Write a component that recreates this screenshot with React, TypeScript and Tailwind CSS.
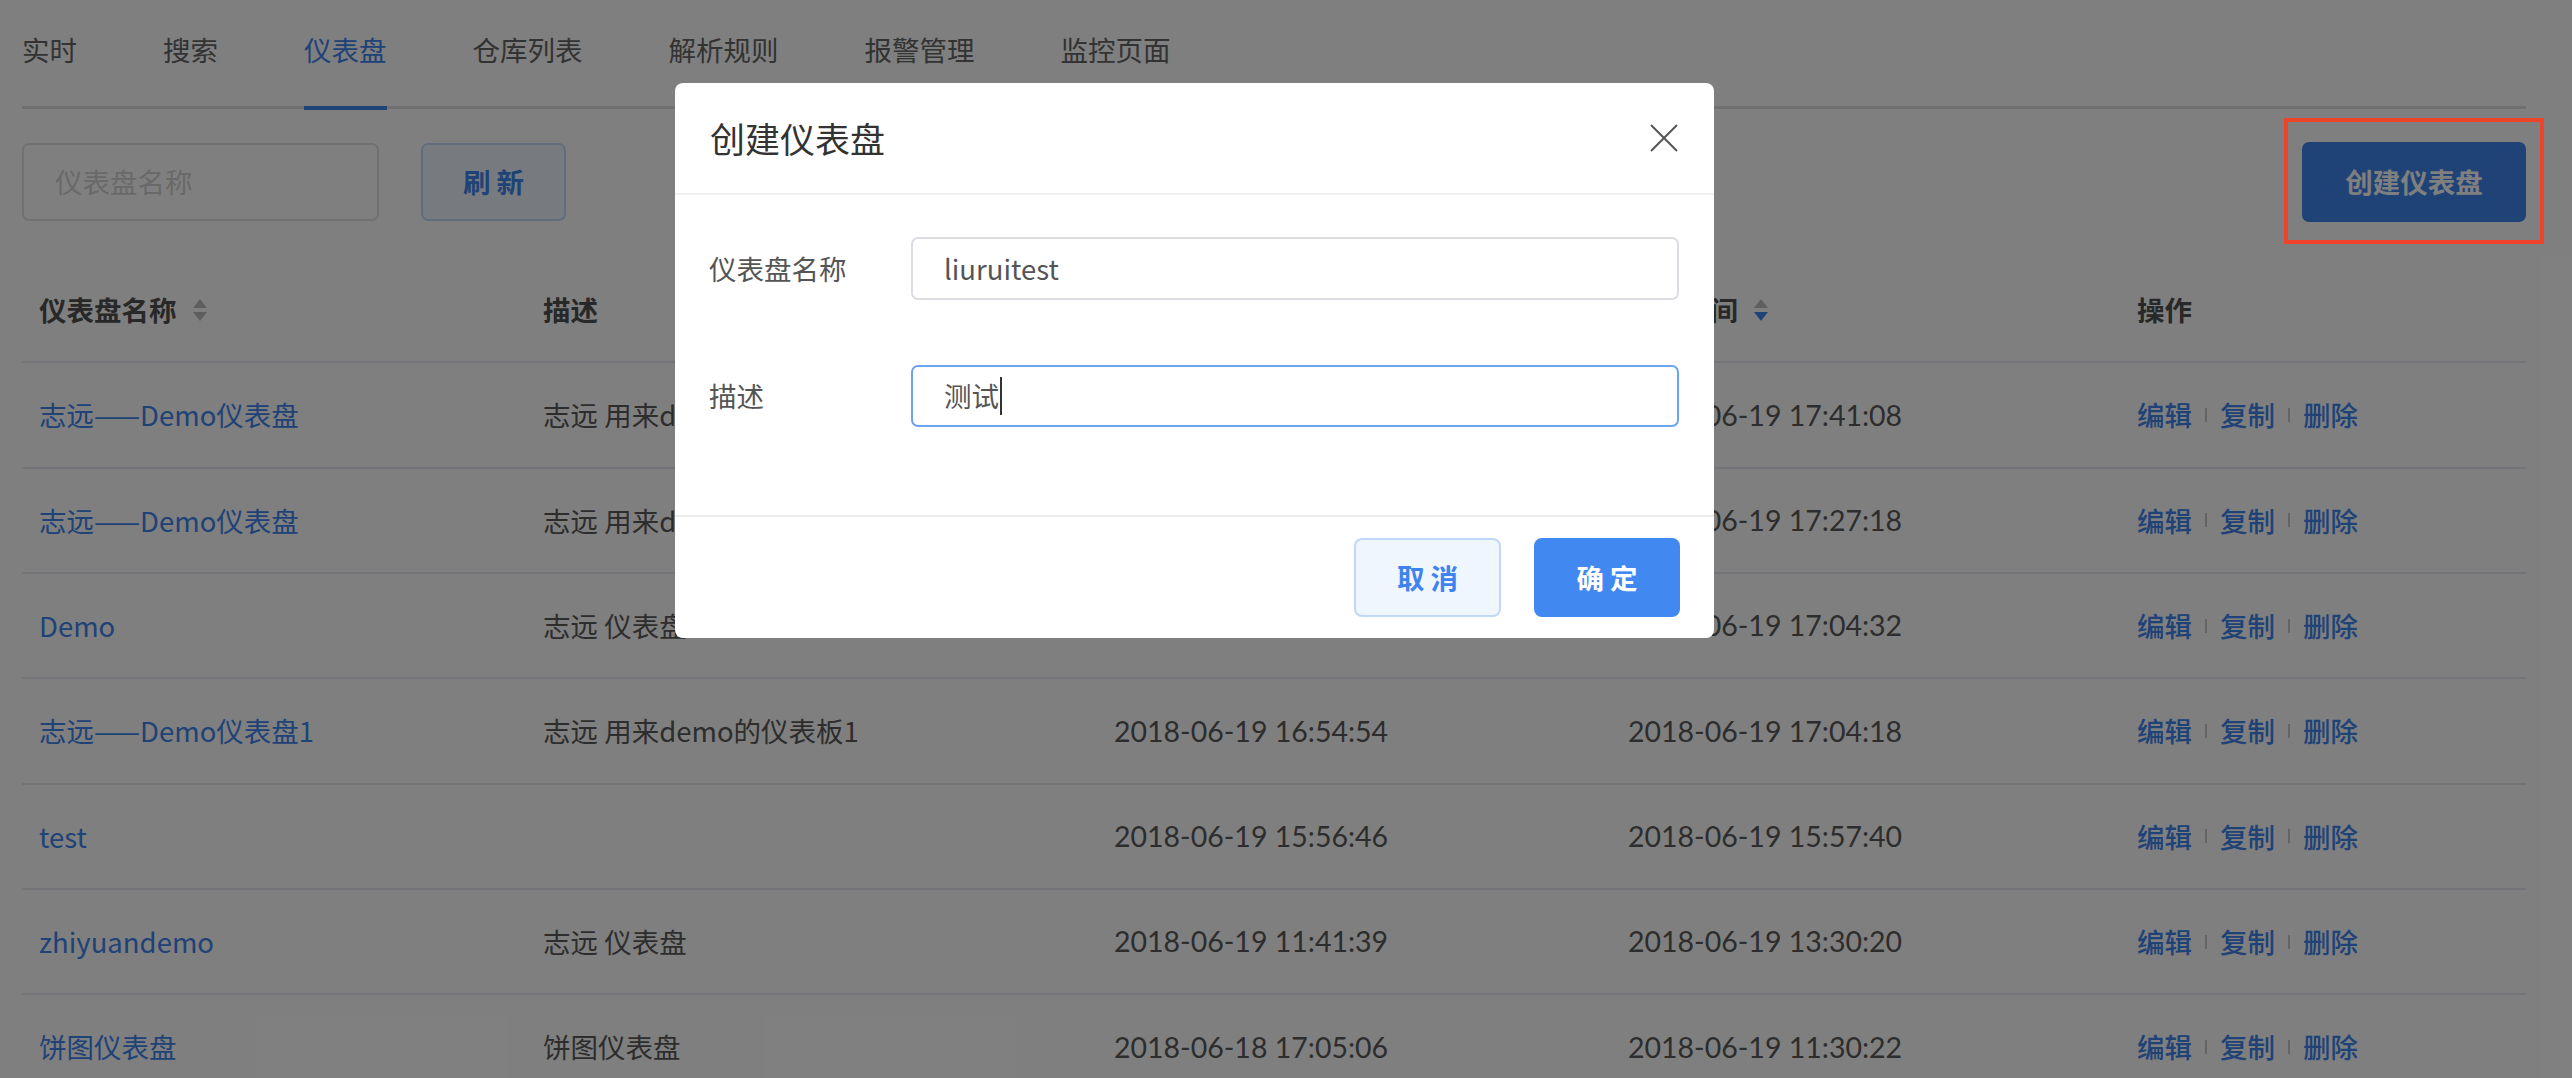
const tabs = ["实时", "搜索", "仪表盘", "仓库列表", "解析规则", "报警管理", "监控页面"];

const rows = [
  { name: "志远——Demo仪表盘", desc: "志远 用来demo的仪表板", created: "2018-06-19 17:38:52", updated: "2018-06-19 17:41:08" },
  { name: "志远——Demo仪表盘", desc: "志远 用来demo的仪表板", created: "2018-06-19 17:25:41", updated: "2018-06-19 17:27:18" },
  { name: "Demo", desc: "志远 仪表盘", created: "2018-06-19 17:02:15", updated: "2018-06-19 17:04:32" },
  { name: "志远——Demo仪表盘1", desc: "志远 用来demo的仪表板1", created: "2018-06-19 16:54:54", updated: "2018-06-19 17:04:18" },
  { name: "test", desc: "", created: "2018-06-19 15:56:46", updated: "2018-06-19 15:57:40" },
  { name: "zhiyuandemo", desc: "志远 仪表盘", created: "2018-06-19 11:41:39", updated: "2018-06-19 13:30:20" },
  { name: "饼图仪表盘", desc: "饼图仪表盘", created: "2018-06-18 17:05:06", updated: "2018-06-19 11:30:22" },
];

const cols = "grid grid-cols-[504px_571px_514px_509px_1fr] items-center";

export default function App() {
  return (
    <div className="relative w-full h-[1078px] overflow-hidden bg-white font-['Noto_Sans_CJK_SC',sans-serif] text-[27.5px] text-[#5a5a5a]">
      <div className="pl-[22px] pr-[46px]">
        {/* Tabs */}
        <div className="flex h-[109px] gap-[86px] border-b-[3px] border-[#e0e0e0]">
          {tabs.map((t) => (
            <div
              key={t}
              className={`relative flex items-center pb-[6px] ${t === "仪表盘" ? "text-[#3f84ee]" : "text-[#666]"}`}
            >
              {t}
              {t === "仪表盘" && <span className="absolute left-0 right-0 bottom-[-4px] h-[4px] bg-[#3f84ee]" />}
            </div>
          ))}
        </div>

        {/* Toolbar */}
        <div className="mt-[34px] flex h-[78px] items-center justify-between">
          <div className="flex h-full items-center">
            <div className="flex h-full w-[357px] items-center rounded-[7px] border-2 border-[#e3e3e8] pl-[31px] text-[#d2d2d2]">
              仪表盘名称
            </div>
            <button className="ml-[42px] h-full w-[145px] rounded-[7px] border-2 border-[#c2daf8] bg-[#eef5fe] font-bold text-[#3f84ee]">
              刷 新
            </button>
          </div>
          <button className="h-[80px] w-[224px] rounded-[7px] bg-[#3f84ee] font-semibold text-white">创建仪表盘</button>
        </div>

        {/* Table */}
        <div className="mt-[37px]">
          <div className={`${cols} h-[105.33px] border-b-2 border-[#e9e9f0] font-bold text-[#505050]`}>
            <div className="flex items-center gap-[16px] pl-[17px]">
              仪表盘名称 <SortIcon />
            </div>
            <div className="pl-[17px]">描述</div>
            <div className="flex items-center gap-[16px] pl-[17px]">
              创建时间 <SortIcon />
            </div>
            <div className="flex items-center gap-[16px] pl-[17px]">
              更新时间 <SortIcon active />
            </div>
            <div className="pl-[17px]">操作</div>
          </div>
          {rows.map((r, i) => (
            <div key={i} className={`${cols} h-[105.33px] border-b-2 border-[#e9e9f0]`}>
              <div className="pl-[17px] text-[#3f84ee]">{r.name}</div>
              <div className="pl-[17px]">{r.desc}</div>
              <div className="pl-[17px] font-['Lato',sans-serif] text-[28.5px]">{r.created}</div>
              <div className="pl-[17px] font-['Lato',sans-serif] text-[28.5px]">{r.updated}</div>
              <div className="flex items-center pl-[17px] font-medium text-[#3f84ee]">
                <span>编辑</span>
                <span className="mx-[13px] h-[14px] w-[2px] bg-[#c8c8c8]" />
                <span>复制</span>
                <span className="mx-[13px] h-[14px] w-[2px] bg-[#c8c8c8]" />
                <span>删除</span>
              </div>
            </div>
          ))}
        </div>
      </div>

      {/* Mask */}
      <div className="absolute inset-0 bg-black/50" />

      {/* Annotation box */}
      <div className="absolute left-[2284px] top-[118px] h-[126px] w-[260px] border-[4px] border-[#f0432c]" />

      {/* Dialog */}
      <div className="absolute left-[675px] top-[83px] flex h-[555px] w-[1039px] flex-col rounded-[8px] bg-white">
        <div className="flex h-[112px] items-center justify-between border-b-2 border-[#f0f0f3] pl-[35px] pr-[36px]">
          <span className="text-[35px] text-[#333]">创建仪表盘</span>
          <svg width="28" height="28" viewBox="0 0 28 28" fill="none" stroke="#555" strokeWidth="2">
            <path d="M1 1 L27 27 M27 1 L1 27" />
          </svg>
        </div>
        <div className="flex-1 pl-[34px] pr-[35px] pt-[42px]">
          <div className="flex h-[63px] items-center">
            <span className="w-[202px] text-[#555]">仪表盘名称</span>
            <div className="flex h-full flex-1 items-center rounded-[7px] border-2 border-[#dcdce2] pl-[31px] text-[#555]">
              liuruitest
            </div>
          </div>
          <div className="mt-[65px] flex h-[62px] items-center">
            <span className="w-[202px] text-[#555]">描述</span>
            <div className="flex h-full flex-1 items-center rounded-[7px] border-2 border-[#6aa4f2] pl-[31px] text-[#555]">
              测试
              <span className="ml-[1px] h-[38px] w-[2px] bg-[#333]" />
            </div>
          </div>
        </div>
        <div className="flex h-[123px] items-center justify-end gap-[33px] border-t-2 border-[#ebebeb] pr-[34px]">
          <button className="h-[79px] w-[147px] rounded-[8px] border-2 border-[#bfd8f8] bg-[#eff6fe] font-bold text-[#3f84ee]">
            取 消
          </button>
          <button className="h-[79px] w-[146px] rounded-[8px] bg-[#4188f0] font-bold text-white">确 定</button>
        </div>
      </div>
    </div>
  );
}

function SortIcon({ active = false }: { active?: boolean }) {
  return (
    <svg width="14" height="22" viewBox="0 0 14 22">
      <path d="M7 0 L14 9 L0 9 Z" fill="#bdbdbd" />
      <path d="M0 13 L14 13 L7 22 Z" fill={active ? "#3f84ee" : "#bdbdbd"} />
    </svg>
  );
}
